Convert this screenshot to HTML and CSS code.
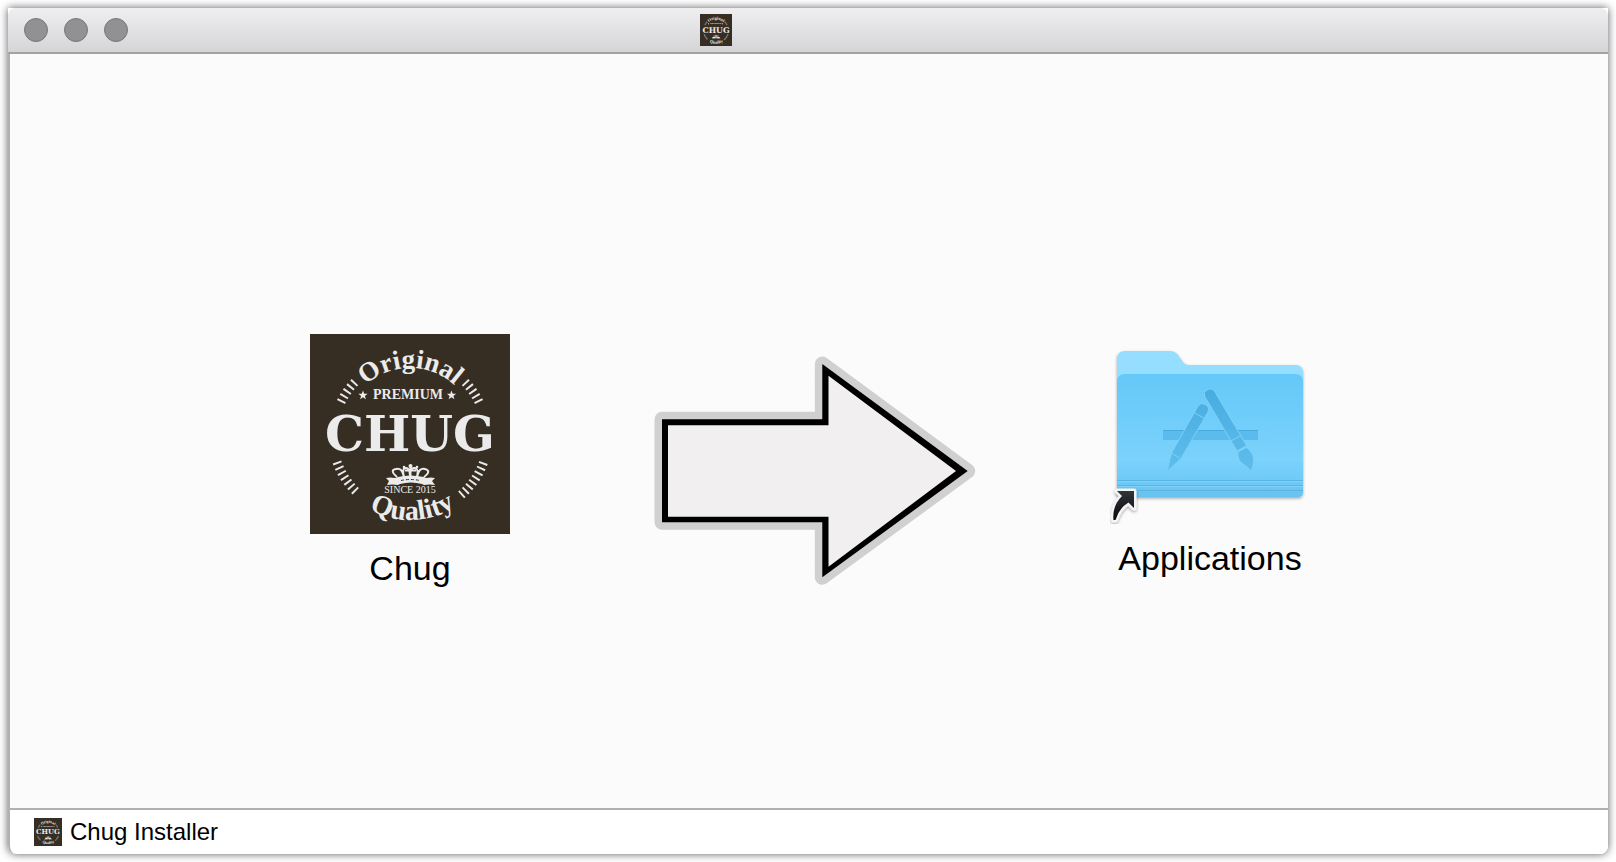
FILE: index.html
```html
<!DOCTYPE html>
<html lang="en">
<head>
<meta charset="utf-8">
<title>Chug Installer</title>
<link rel="stylesheet" href="styles.css">
</head>
<body>
<div class="window">
  <header class="titlebar">
    <div class="lights">
      <button type="button" class="light" aria-label="Close"></button>
      <button type="button" class="light" aria-label="Minimize"></button>
      <button type="button" class="light" aria-label="Zoom"></button>
    </div>
    <svg class="title-icon" viewBox="0 0 200 200" aria-hidden="true"><use href="#chug-logo"/></svg>
  </header>

  <main class="content">
    <div class="install">
      <figure class="item">
        <svg class="app-icon" viewBox="0 0 200 200" role="img" aria-label="Chug">
          <g id="chug-logo">
            <rect width="200" height="200" fill="#362d23"/>
            <path id="arc-top" d="M34 100A66 66 0 0 1 166 100" fill="none"/>
            <path id="arc-bottom" d="M14 100A86 86 0 0 0 186 100" fill="none"/>
            <g fill="none" stroke="#e9e9e9" stroke-width="9">
              <path d="M31 68A76 76 0 0 1 45 48" stroke-dasharray="2 3.6"/>
              <path d="M169 68A76 76 0 0 0 155 48" stroke-dasharray="2 3.6"/>
              <path d="M27 128A78 78 0 0 0 46 157.500" stroke-dasharray="2 3.500"/>
              <path d="M173.500 128.500A79 79 0 0 1 151 161" stroke-dasharray="2 3.400"/>
            </g>
            <g fill="#ebebeb" font-family="Liberation Serif, serif" font-weight="bold" text-anchor="middle">
              <text font-size="27"><textPath href="#arc-top" startOffset="50%">Original</textPath></text>
              <text font-size="28"><textPath href="#arc-bottom" startOffset="51%">Quality</textPath></text>
              <text x="98" y="65" font-size="14">PREMIUM</text>
              <text x="100" y="117" font-size="49" font-family="DejaVu Serif, serif">CHUG</text>
              <text x="100" y="159" font-size="10" font-weight="normal">SINCE 2015</text>
              <path d="M53 56.500l1.200 3.200 3.400.1-2.700 2.100 1 3.300-2.900-1.900-2.900 1.900 1-3.300-2.700-2.100 3.400-.1zM141.500 56.500l1.200 3.200 3.400.1-2.700 2.100 1 3.300-2.900-1.900-2.900 1.900 1-3.300-2.700-2.100 3.400-.1z"/>
              <path d="M76 144q4-1 9 0l3-1q12-3 26 0l2 1q5-1 9 0l-3 3 3 4q-6-1-11 0l-2-1q-11-3-22 0l-2 1q-6-1-11 0l2-4z"/>
              <circle cx="100.500" cy="132" r="2"/><circle cx="94" cy="133" r="1.300"/><circle cx="107" cy="133" r="1.300"/>
            </g>
            <path d="M87 143q-8-7-1-8 6-2 8 8-2-8 1-9 5-1 5 8 0-9 5-8 4 1 2 9 2-10 8-8 7 2-1 8M100.500 132v11M95 136.500h11" fill="none" stroke="#ebebeb" stroke-width="2"/>
            <path d="M91 146.500q9-2 19 0" fill="none" stroke="#362d23" stroke-dasharray="3 2"/>
          </g>
        </svg>
        <figcaption class="label">Chug</figcaption>
      </figure>

      <svg class="arrow" viewBox="0 0 332 234" aria-hidden="true">
        <path d="M18 65.300H178.300V10L323.700 117 178.300 223.300V168.300H18z" fill="#000" stroke="#d0d0d0" stroke-width="15" stroke-linejoin="round"/>
        <path d="M18 65.300H178.300V10L323.700 117 178.300 223.300V168.300H18z"/>
        <path d="M24 71.300H184.500V21.700L312 117 184.500 212.700V162.700H24z" fill="#f1eff0"/>
      </svg>

      <figure class="item">
        <svg class="folder" viewBox="0 0 200 190" role="img" aria-label="Applications folder">
          <defs>
            <linearGradient id="front" x2="0" y2="1">
              <stop offset="0" stop-color="#65c8f8"/><stop offset=".7" stop-color="#7bd2fb"/><stop offset=".84" stop-color="#70cbf7"/><stop offset="1" stop-color="#68c2ef"/>
            </linearGradient>
            <linearGradient id="tool" gradientUnits="userSpaceOnUse" x1="0" y1="55" x2="0" y2="137">
              <stop offset="0" stop-color="#47ace0"/><stop offset="1" stop-color="#5fbdec"/>
            </linearGradient>
            <linearGradient id="ink" x2="0" y2="1"><stop offset="0" stop-color="#30353a"/><stop offset="1" stop-color="#08090b"/></linearGradient>
            <filter id="soft" x="-20%" y="-20%" width="140%" height="140%"><feDropShadow dx="0" dy="1.500" stdDeviation="1.500" flood-opacity=".35"/></filter>
          </defs>
          <path d="M7 25Q7 17 15 17H60Q65 17 68 21L73 28Q75 31 80 31H186Q193 31 193 39V158Q193 163 188 163H12Q7 163 7 158z" fill="#96deff" filter="url(#soft)"/>
          <path d="M7 48Q7 40 15 40H185Q193 40 193 48V158Q193 163 188 163H12Q7 163 7 158z" fill="url(#front)"/>
          <path d="M7 146.500H193M7 151.500H193M7 156.500H193" stroke="#58b4e2"/>
          <path d="M7 147.500H193M7 152.500H193" stroke="#82d2f8"/>
          <path d="M53 96H148V106H53z" fill="#5abbec"/>
          <path d="M53 96.500H148" stroke="#49aadd"/>
          <g stroke="#7bd1fa" fill="url(#tool)">
            <path d="M87.500 73Q90 68 95 70.500 100 73 98 78L71 124.500 57 137.500 61.500 119z"/>
            <path d="M94.500 62Q93 58 97 56 102 53 105 58L136.500 111.500 127 117z"/>
            <path d="M128 118L136.500 113.500Q146 120 143 132L141 137.500Q138 133 133 130 127 126 128 118z"/>
            <path d="M85 79L94.500 84.500M61.500 119L70.500 124.500M121 107L131 101.500" fill="none"/>
          </g>
          <path d="M7 157H24V174L18.500 168.500Q9 174 5.500 186H3.500Q2 172 12 162z" fill="#fff" stroke="#f4f4f4" stroke-width="5" stroke-linejoin="round" filter="url(#soft)"/>
          <path d="M7 157H24V174L18.500 168.500Q9 174 5.500 186H3.500Q2 172 12 162z" fill="url(#ink)"/>
        </svg>
        <figcaption class="label">Applications</figcaption>
      </figure>
    </div>
  </main>

  <footer class="pathbar">
    <svg class="path-icon" viewBox="0 0 200 200" aria-hidden="true"><use href="#chug-logo"/></svg>
    <span>Chug Installer</span>
  </footer>
</div>
</body>
</html>
```
FILE: styles.css
```css
* {
  box-sizing: border-box;
}

body {
  margin: 0;
  min-height: 100vh;
  padding: 8px;
  display: flex;
  background: #fff;
  color: #000;
  font-family: "Liberation Sans", Arial, sans-serif;
}

.window {
  flex: 1;
  display: flex;
  flex-direction: column;
  background: #fff;
  border-radius: 0 0 8px 8px;
  box-shadow: 0 0 8px rgba(0, 0, 0, 0.65);
}

.titlebar {
  display: grid;
  grid-template-columns: 1fr auto 1fr;
  align-items: center;
  height: 46px;
  padding: 0 200px 0 16px;
  border-bottom: 2px solid #a3a3a3;
  border-radius: 8px 8px 0 0;
  background: linear-gradient(#efeef0, #d5d4d6);
}

.lights {
  display: flex;
  gap: 16px;
}

.light {
  width: 24px;
  height: 24px;
  padding: 0;
  border: 1px solid #77767a;
  border-radius: 50%;
  background: #919093;
}

.title-icon {
  width: 32px;
  height: 32px;
}

.content {
  flex: 1;
  padding: 280px 0 0 2px;
  border-left: 2px solid #b0b0b0;
  background: #fbfbfb;
}

.install {
  display: flex;
  justify-content: space-between;
  align-items: flex-start;
  max-width: 1000px;
  margin: 0 auto;
}

.item {
  display: flex;
  flex-direction: column;
  align-items: center;
  gap: 14px;
  width: 200px;
  margin: 0;
}

.app-icon {
  width: 200px;
  height: 200px;
}

.folder {
  width: 200px;
  height: 190px;
}

.arrow {
  width: 332px;
  height: 234px;
  margin-top: 20px;
}

.label {
  font-size: 34px;
  line-height: 40px;
}

.pathbar {
  display: flex;
  align-items: center;
  gap: 8px;
  height: 46px;
  padding: 0 24px;
  border-top: 2px solid #b0b0b0;
  border-left: 2px solid #b0b0b0;
  border-radius: 0 0 8px 8px;
  background: #fff;
  font-size: 24px;
  line-height: 28px;
}

.path-icon {
  width: 28px;
  height: 28px;
}
```
